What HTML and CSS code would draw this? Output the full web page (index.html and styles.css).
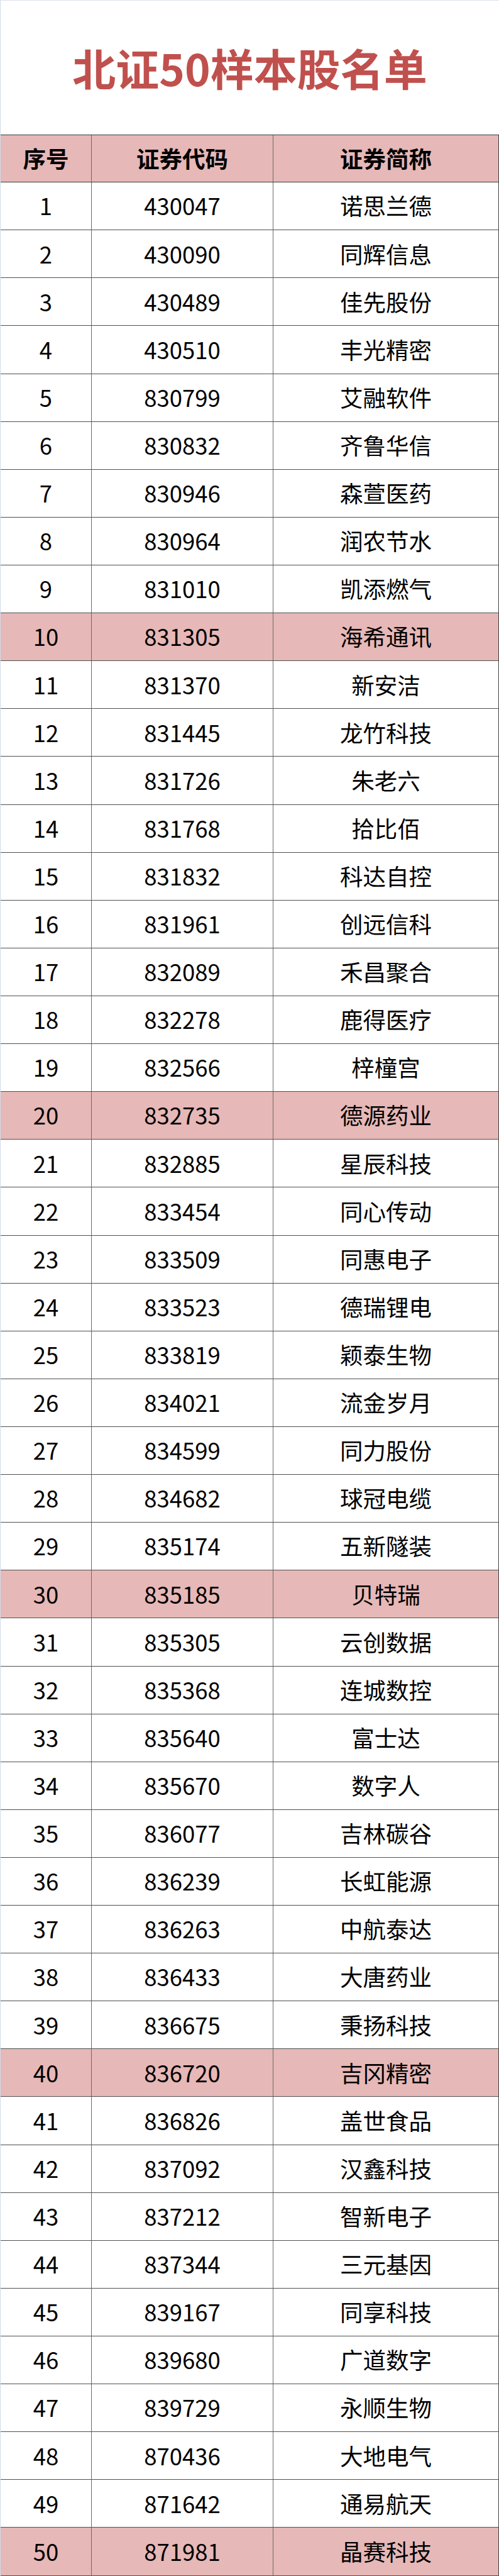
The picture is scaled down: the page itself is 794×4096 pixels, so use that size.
FILE: index.html
```html
<!DOCTYPE html>
<html lang="zh-CN">
<head>
<meta charset="utf-8">
<title>北证50样本股名单</title>
<link rel="stylesheet" href="styles.css">
</head>
<body>
<div class="page">
  <div class="title">北证50样本股名单</div>
  <div class="table">
    <div class="row head"><div class="cell">序号</div><div class="cell">证券代码</div><div class="cell">证券简称</div></div>
    <div class="row"><div class="cell">1</div><div class="cell">430047</div><div class="cell">诺思兰德</div></div>
    <div class="row"><div class="cell">2</div><div class="cell">430090</div><div class="cell">同辉信息</div></div>
    <div class="row"><div class="cell">3</div><div class="cell">430489</div><div class="cell">佳先股份</div></div>
    <div class="row"><div class="cell">4</div><div class="cell">430510</div><div class="cell">丰光精密</div></div>
    <div class="row"><div class="cell">5</div><div class="cell">830799</div><div class="cell">艾融软件</div></div>
    <div class="row"><div class="cell">6</div><div class="cell">830832</div><div class="cell">齐鲁华信</div></div>
    <div class="row"><div class="cell">7</div><div class="cell">830946</div><div class="cell">森萱医药</div></div>
    <div class="row"><div class="cell">8</div><div class="cell">830964</div><div class="cell">润农节水</div></div>
    <div class="row"><div class="cell">9</div><div class="cell">831010</div><div class="cell">凯添燃气</div></div>
    <div class="row hl"><div class="cell">10</div><div class="cell">831305</div><div class="cell">海希通讯</div></div>
    <div class="row"><div class="cell">11</div><div class="cell">831370</div><div class="cell">新安洁</div></div>
    <div class="row"><div class="cell">12</div><div class="cell">831445</div><div class="cell">龙竹科技</div></div>
    <div class="row"><div class="cell">13</div><div class="cell">831726</div><div class="cell">朱老六</div></div>
    <div class="row"><div class="cell">14</div><div class="cell">831768</div><div class="cell">拾比佰</div></div>
    <div class="row"><div class="cell">15</div><div class="cell">831832</div><div class="cell">科达自控</div></div>
    <div class="row"><div class="cell">16</div><div class="cell">831961</div><div class="cell">创远信科</div></div>
    <div class="row"><div class="cell">17</div><div class="cell">832089</div><div class="cell">禾昌聚合</div></div>
    <div class="row"><div class="cell">18</div><div class="cell">832278</div><div class="cell">鹿得医疗</div></div>
    <div class="row"><div class="cell">19</div><div class="cell">832566</div><div class="cell">梓橦宫</div></div>
    <div class="row hl"><div class="cell">20</div><div class="cell">832735</div><div class="cell">德源药业</div></div>
    <div class="row"><div class="cell">21</div><div class="cell">832885</div><div class="cell">星辰科技</div></div>
    <div class="row"><div class="cell">22</div><div class="cell">833454</div><div class="cell">同心传动</div></div>
    <div class="row"><div class="cell">23</div><div class="cell">833509</div><div class="cell">同惠电子</div></div>
    <div class="row"><div class="cell">24</div><div class="cell">833523</div><div class="cell">德瑞锂电</div></div>
    <div class="row"><div class="cell">25</div><div class="cell">833819</div><div class="cell">颖泰生物</div></div>
    <div class="row"><div class="cell">26</div><div class="cell">834021</div><div class="cell">流金岁月</div></div>
    <div class="row"><div class="cell">27</div><div class="cell">834599</div><div class="cell">同力股份</div></div>
    <div class="row"><div class="cell">28</div><div class="cell">834682</div><div class="cell">球冠电缆</div></div>
    <div class="row"><div class="cell">29</div><div class="cell">835174</div><div class="cell">五新隧装</div></div>
    <div class="row hl"><div class="cell">30</div><div class="cell">835185</div><div class="cell">贝特瑞</div></div>
    <div class="row"><div class="cell">31</div><div class="cell">835305</div><div class="cell">云创数据</div></div>
    <div class="row"><div class="cell">32</div><div class="cell">835368</div><div class="cell">连城数控</div></div>
    <div class="row"><div class="cell">33</div><div class="cell">835640</div><div class="cell">富士达</div></div>
    <div class="row"><div class="cell">34</div><div class="cell">835670</div><div class="cell">数字人</div></div>
    <div class="row"><div class="cell">35</div><div class="cell">836077</div><div class="cell">吉林碳谷</div></div>
    <div class="row"><div class="cell">36</div><div class="cell">836239</div><div class="cell">长虹能源</div></div>
    <div class="row"><div class="cell">37</div><div class="cell">836263</div><div class="cell">中航泰达</div></div>
    <div class="row"><div class="cell">38</div><div class="cell">836433</div><div class="cell">大唐药业</div></div>
    <div class="row"><div class="cell">39</div><div class="cell">836675</div><div class="cell">秉扬科技</div></div>
    <div class="row hl"><div class="cell">40</div><div class="cell">836720</div><div class="cell">吉冈精密</div></div>
    <div class="row"><div class="cell">41</div><div class="cell">836826</div><div class="cell">盖世食品</div></div>
    <div class="row"><div class="cell">42</div><div class="cell">837092</div><div class="cell">汉鑫科技</div></div>
    <div class="row"><div class="cell">43</div><div class="cell">837212</div><div class="cell">智新电子</div></div>
    <div class="row"><div class="cell">44</div><div class="cell">837344</div><div class="cell">三元基因</div></div>
    <div class="row"><div class="cell">45</div><div class="cell">839167</div><div class="cell">同享科技</div></div>
    <div class="row"><div class="cell">46</div><div class="cell">839680</div><div class="cell">广道数字</div></div>
    <div class="row"><div class="cell">47</div><div class="cell">839729</div><div class="cell">永顺生物</div></div>
    <div class="row"><div class="cell">48</div><div class="cell">870436</div><div class="cell">大地电气</div></div>
    <div class="row"><div class="cell">49</div><div class="cell">871642</div><div class="cell">通易航天</div></div>
    <div class="row hl"><div class="cell">50</div><div class="cell">871981</div><div class="cell">晶赛科技</div></div>
  </div>
</div>
</body>
</html>
```

FILE: styles.css
```css
html, body {
  margin: 0;
  padding: 0;
  background: #ffffff;
}

body {
  font-family: "Noto Sans CJK SC", "Microsoft YaHei", sans-serif;
  color: #000000;
}

.page {
  width: 794px;
  box-sizing: border-box;
  border-top: 1px solid #dde2ec;
  border-left: 1px solid #d3dbe9;
}

.title {
  height: 213px;
  display: flex;
  align-items: center;
  justify-content: center;
  font-size: 69px;
  font-weight: 700;
  color: #c0504d;
  line-height: 1;
  letter-spacing: 0;
}

.table {
  display: flex;
  flex-direction: column;
}

.row {
  display: grid;
  grid-template-columns: 145px 289px 1fr;
  height: 76.12px;
  box-sizing: border-box;
  border-bottom: 1px solid #505050;
}

.row.head {
  border-top: 1px solid #3c3c3c;
  border-bottom: 1px solid #3c3c3c;
  background: #e6b8b7;
  font-weight: 700;
}

.row.hl {
  background: #e6b8b7;
}

.cell {
  display: flex;
  align-items: center;
  justify-content: center;
  border-right: 1px solid #6a6a6a;
  font-size: 36.5px;
  line-height: 1;
}

.cell:last-child {
  border-right: 1px solid #404040;
}
```
